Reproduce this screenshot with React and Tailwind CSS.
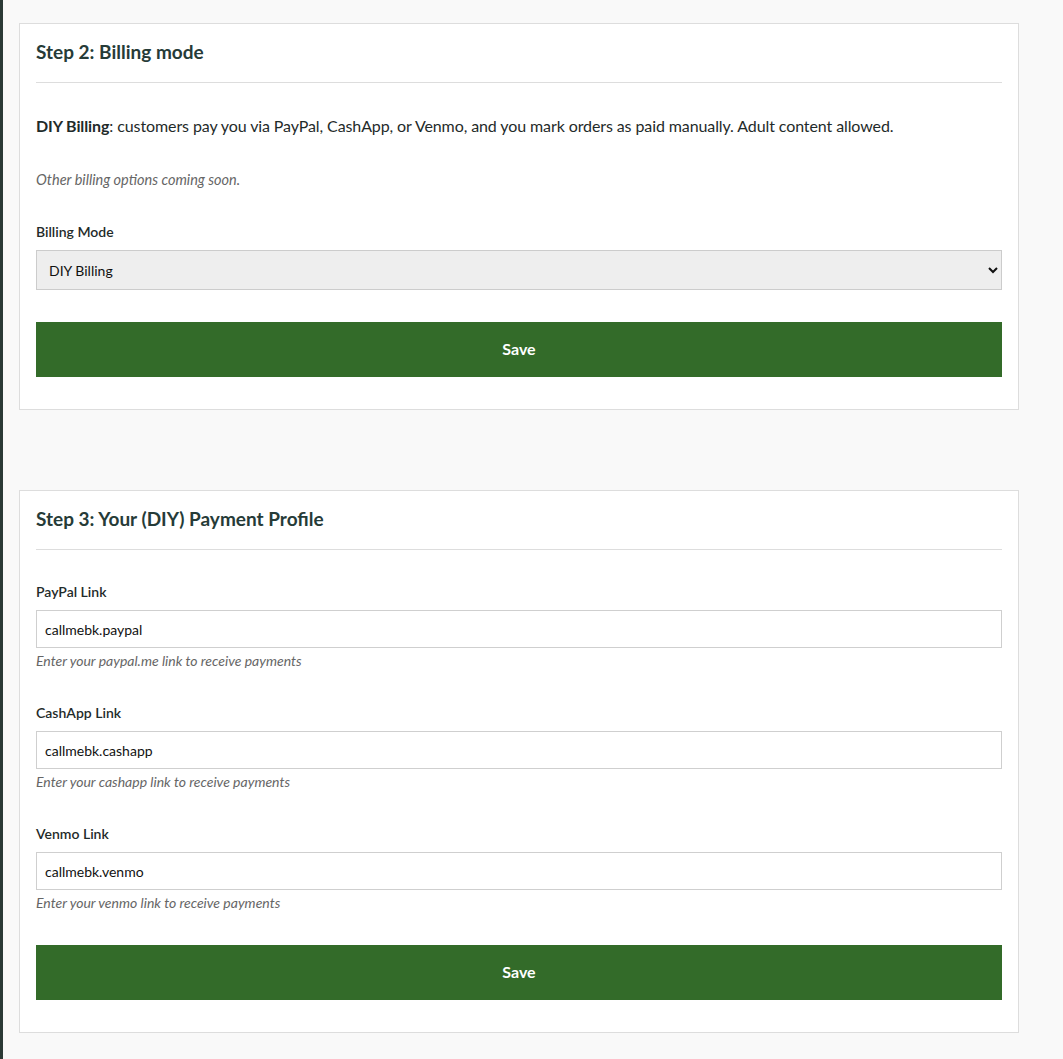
import React, { useState } from 'react';

const font = { fontFamily: 'Lato, "Open Sans", Arial, sans-serif' };

const Field = ({ label, value, hint, onChange }) => (
  <div className="mt-[31px]">
    <label className="block text-[14px] leading-[21px] font-semibold text-[#1f2b2a]">{label}</label>
    <input
      value={value}
      onChange={e => onChange(e.target.value)}
      className="mt-[8px] block w-full h-[38px] border border-[#cfcfcf] bg-white px-[8px] text-[14px] text-[#111] outline-none"
    />
    <p className="mt-[3px] text-[14px] leading-[20px] italic text-[#666]">{hint}</p>
  </div>
);

const Card = ({ title, children }) => (
  <div className="w-[1000px] bg-white border border-[#dddddd] px-4 pt-[14px] pb-[32px]">
    <h3 className="text-[19px] leading-[28px] font-bold text-[#263b38] pb-[16px] border-b border-[#dddddd]">
      {title}
    </h3>
    {children}
  </div>
);

const SaveButton = () => (
  <button className="mt-[32px] block w-full h-[55px] bg-[#336b29] text-white text-[16px] font-bold pb-[2px]">
    Save
  </button>
);

export default function App() {
  const [mode, setMode] = useState('diy');
  const [links, setLinks] = useState({
    paypal: 'callmebk.paypal',
    cashapp: 'callmebk.cashapp',
    venmo: 'callmebk.venmo'
  });

  return (
    <div className="min-h-screen bg-[#f9f9f9] border-l-[3px] border-[#2b3a36] pl-4 pt-[23px] pb-10" style={font}>
      <Card title="Step 2: Billing mode">
        <p className="mt-[31px] text-[16px] leading-[24px] tracking-[-0.1px] text-[#1f2b2a]">
          <strong className="font-bold">DIY Billing</strong>: customers pay you via PayPal, CashApp, or Venmo, and you mark orders as paid manually. Adult content allowed.
        </p>
        <p className="mt-[31px] text-[14.5px] leading-[21px] italic text-[#666]">Other billing options coming soon.</p>
        <label className="mt-[31px] block text-[14px] leading-[21px] font-semibold text-[#1f2b2a]">Billing Mode</label>
        <select
          value={mode}
          onChange={e => setMode(e.target.value)}
          className="mt-[8px] block w-full h-[40px] border border-[#cccccc] bg-[#eeeeee] pl-[8px] pr-1 text-[14px] text-[#111] outline-none"
        >
          <option value="diy">DIY Billing</option>
        </select>
        <SaveButton />
      </Card>

      <div className="h-[80px]" />

      <Card title="Step 3: Your (DIY) Payment Profile">
        <Field label="PayPal Link" value={links.paypal} hint="Enter your paypal.me link to receive payments"
          onChange={v => setLinks(p => ({ ...p, paypal: v }))} />
        <Field label="CashApp Link" value={links.cashapp} hint="Enter your cashapp link to receive payments"
          onChange={v => setLinks(p => ({ ...p, cashapp: v }))} />
        <Field label="Venmo Link" value={links.venmo} hint="Enter your venmo link to receive payments"
          onChange={v => setLinks(p => ({ ...p, venmo: v }))} />
        <SaveButton />
      </Card>
    </div>
  );
}
